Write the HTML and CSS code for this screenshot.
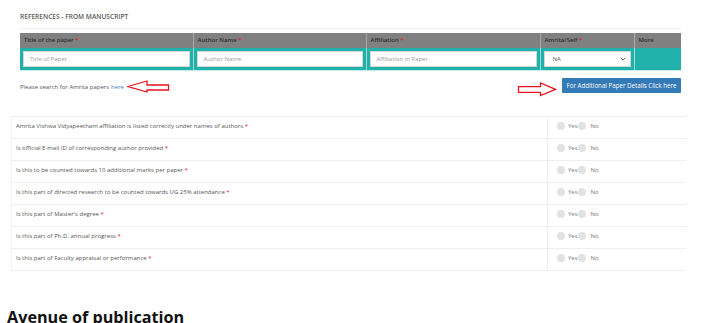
FILE: index.html
```html
<!DOCTYPE html>
<html>
<head>
<meta charset="utf-8">
<link rel="stylesheet" href="styles.css">
</head>
<body>
<section class="refs">
  <h4 class="refs-title">REFERENCES - FROM MANUSCRIPT</h4>
  <div class="refs-rule"></div>
  <table class="ref-table">
    <colgroup>
      <col style="width:173px"><col style="width:173px"><col style="width:174px"><col style="width:94px"><col>
    </colgroup>
    <thead>
      <tr>
        <th>Title of the paper <span class="req">*</span></th>
        <th>Author Name <span class="req">*</span></th>
        <th>Affiliation <span class="req">*</span></th>
        <th>Amrita/Self <span class="req">*</span></th>
        <th>More</th>
      </tr>
    </thead>
    <tbody>
      <tr>
        <td><div class="field">Title of Paper</div></td>
        <td><div class="field">Author Name</div></td>
        <td><div class="field">Affiliation in Paper</div></td>
        <td><div class="field select"><span>NA</span><svg width="6" height="4" viewBox="0 0 6 4"><path d="M0.6 0.8 L3 3.1 L5.4 0.8" fill="none" stroke="#555" stroke-width="1"/></svg></div></td>
        <td></td>
      </tr>
    </tbody>
  </table>
  <div class="actions">
    <p class="search">Please search for Amrita papers <a href="#">here</a>
      <svg class="arrow-left" width="44" height="13" viewBox="0 0 44 13"><polygon points="1,6.5 20,1 20,5 41.5,5 41.5,10 20,10 20,12" fill="none" stroke="#e8141c" stroke-width="1.3"/></svg>
    </p>
    <div class="more">
      <svg class="arrow-right" width="40" height="15" viewBox="0 0 40 15"><polygon points="1.5,4.7 23.5,4.7 23.5,1 38.5,7.3 23.5,13.5 23.5,10.3 1.5,10.3" fill="none" stroke="#e8141c" stroke-width="1.3"/></svg>
      <button class="btn">For Additional Paper Details Click here</button>
    </div>
  </div>
</section>

<table class="questions">
  <tbody>
    <tr><td class="q">Amrita Vishwa Vidyapeetham affiliation is listed correctly under names of authors <span class="req">*</span></td><td class="opts"><span class="radio"></span>Yes<span class="radio"></span><span class="no">No</span></td></tr>
    <tr><td class="q">Is official E-mail ID of corresponding author provided <span class="req">*</span></td><td class="opts"><span class="radio"></span>Yes<span class="radio"></span><span class="no">No</span></td></tr>
    <tr><td class="q">Is this to be counted towards 10 additional marks per paper <span class="req">*</span></td><td class="opts"><span class="radio"></span>Yes<span class="radio"></span><span class="no">No</span></td></tr>
    <tr><td class="q">Is this part of directed research to be counted towards UG 25% attendance <span class="req">*</span></td><td class="opts"><span class="radio"></span>Yes<span class="radio"></span><span class="no">No</span></td></tr>
    <tr><td class="q">Is this part of Master's degree <span class="req">*</span></td><td class="opts"><span class="radio"></span>Yes<span class="radio"></span><span class="no">No</span></td></tr>
    <tr><td class="q">Is this part of Ph.D. annual progress <span class="req">*</span></td><td class="opts"><span class="radio"></span>Yes<span class="radio"></span><span class="no">No</span></td></tr>
    <tr><td class="q">Is this part of Faculty appraisal or performance <span class="req">*</span></td><td class="opts"><span class="radio"></span>Yes<span class="radio"></span><span class="no">No</span></td></tr>
  </tbody>
</table>

<h2 class="avenue">Avenue of publication</h2>
</body>
</html>
```

FILE: styles.css
```css
* { box-sizing: border-box; }
html, body { margin: 0; padding: 0; background: #fff; }
body {
  font-family: "Open Sans", "Liberation Sans", sans-serif;
  color: #555;
  font-size: 6px;
}
.refs {
  width: 681px;
  padding-left: 20px;
  padding-top: 12px;
}
.refs-title {
  margin: 0;
  font-size: 6.6px;
  font-weight: 600;
  color: #5a5a5a;
  line-height: 9px;
  height: 16px;
}
.refs-rule {
  height: 1px;
  background: #eee;
  margin-bottom: 4px;
}
.ref-table {
  width: 661px;
  border-collapse: collapse;
  table-layout: fixed;
}
.ref-table th {
  background: #808080;
  color: #2f2f2f;
  font-weight: 600;
  font-size: 6px;
  text-align: left;
  height: 15px;
  padding: 0 4px;
  border-left: 1px solid #a9a9a9;
  line-height: 15px;
}
.ref-table th:first-child { border-left: none; }
.ref-table td {
  background: #20b2aa;
  height: 22px;
  padding: 3px 3px 3px 3px;
  border-left: 1px solid #9fdad6;
  border-bottom: 1px solid #c8ecea;
}
.ref-table td:first-child { border-left: none; }
.req { color: #e8141c; }
.field {
  height: 16px;
  background: #fff;
  border: 1px solid #d5d5d5;
  color: #9a9a9a;
  font-size: 6px;
  line-height: 14px;
  padding: 0 6px;
}
.select {
  display: flex;
  justify-content: space-between;
  align-items: center;
  color: #555;
  padding: 0 4px 0 8px;
}
.actions {
  display: flex;
  justify-content: space-between;
  width: 661px;
  margin-top: 7px;
}
.search {
  margin: 2px 0 0;
  display: flex;
  align-items: center;
  font-size: 6px;
  color: #555;
  height: 13px;
}
.search a { color: #4a7ab0; text-decoration: none; margin-left: 2px; }
.arrow-left { margin-left: 3px; display: block; }
.more {
  display: flex;
  align-items: flex-start;
}
.arrow-right { display: block; margin-top: 4px; margin-right: 5px; }
.btn {
  font-family: "Open Sans", "Liberation Sans", sans-serif;
  font-size: 6.2px;
  color: #fff;
  background: #337ab7;
  border: none;
  height: 15px;
  width: 119px;
  padding: 0;
  border-radius: 1px;
}
.questions {
  margin: 19px 0 0 11px;
  width: 675px;
  border-collapse: collapse;
  table-layout: fixed;
}
.questions td {
  height: 22px;
  border-top: 1px solid #eee;
  border-bottom: 1px solid #eee;
  vertical-align: top;
  padding: 5px 4px 0;
  font-size: 6px;
  line-height: 8px;
  color: #555;
}
.questions td.q { width: 536px; border-left: 1px solid #f2f2f2; }
.questions td.opts {
  border-left: 1px solid #eee;
  padding-left: 9px;
  color: #777;
}
.opts { white-space: nowrap; }
.radio {
  display: inline-block;
  width: 8px;
  height: 8px;
  border-radius: 50%;
  background: #e2e2e2;
  vertical-align: top;
  margin-right: 3px;
}
.no { margin-left: 2px; }
.avenue {
  margin: 35px 0 0 7px;
  font-size: 16.2px;
  font-weight: 700;
  color: #111;
  line-height: 22px;
}
```
